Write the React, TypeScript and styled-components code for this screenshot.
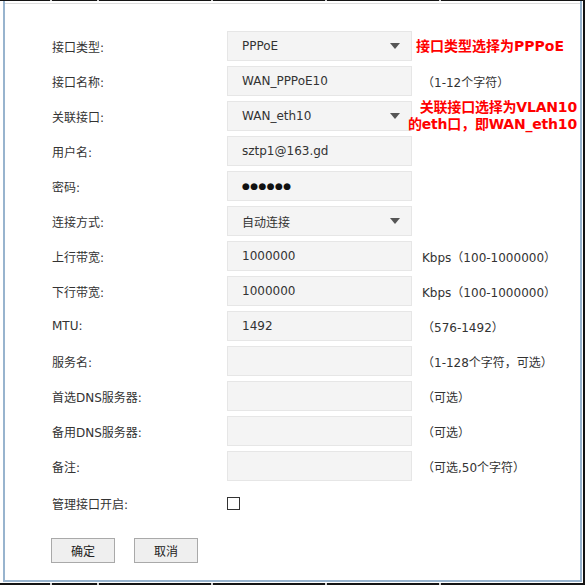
import React from 'react';
import styled, { createGlobalStyle } from 'styled-components';

// ===== TYPES =====
type FieldKind = 'text' | 'select' | 'password' | 'empty';

interface FormRow {
  label: string;
  kind: FieldKind;
  value?: string;
  hint?: string;
  note?: string[];
}

// ===== DATA =====
const rows: FormRow[] = [
  { label: '接口类型:', kind: 'select', value: 'PPPoE', note: ['接口类型选择为PPPoE'] },
  { label: '接口名称:', kind: 'text', value: 'WAN_PPPoE10', hint: '（1-12个字符）' },
  { label: '关联接口:', kind: 'select', value: 'WAN_eth10', note: ['关联接口选择为VLAN10', '的eth口，即WAN_eth10'] },
  { label: '用户名:', kind: 'text', value: 'sztp1@163.gd' },
  { label: '密码:', kind: 'password', value: '●●●●●●' },
  { label: '连接方式:', kind: 'select', value: '自动连接' },
  { label: '上行带宽:', kind: 'text', value: '1000000', hint: 'Kbps（100-1000000）' },
  { label: '下行带宽:', kind: 'text', value: '1000000', hint: 'Kbps（100-1000000）' },
  { label: 'MTU:', kind: 'text', value: '1492', hint: '（576-1492）' },
  { label: '服务名:', kind: 'empty', hint: '（1-128个字符，可选）' },
  { label: '首选DNS服务器:', kind: 'empty', hint: '（可选）' },
  { label: '备用DNS服务器:', kind: 'empty', hint: '（可选）' },
  { label: '备注:', kind: 'empty', hint: '（可选,50个字符）' },
];

const edgeSegments = [50, 45, 112, 112, 112, 0];

// ===== STYLES =====
const GlobalStyle = createGlobalStyle`
  html, body {
    margin: 0;
    padding: 0;
    background: #fff;
  }
  body {
    font-family: "DejaVu Sans", "Noto Sans CJK SC", sans-serif;
    font-size: 12px;
    color: #333;
  }
`;

const Frame = styled.div`
  width: 585px;
  height: 585px;
  box-sizing: border-box;
  display: flex;
  flex-direction: column;
  border-right: 2px solid #141414;
  background: #fff;
  overflow: hidden;
`;

const Edge = styled.div<{ $h: number }>`
  display: flex;
  gap: 2px;
  height: ${p => p.$h}px;
  flex-shrink: 0;
  background: #d4d4d4;
`;

const EdgeSeg = styled.div<{ $w: number }>`
  background: #141414;
  flex: ${p => (p.$w ? `0 0 ${p.$w}px` : '1')};
`;

const Body = styled.div`
  flex: 1;
  display: flex;
  padding: 0 1px 1px 3px;
  min-height: 0;
`;

const Panel = styled.div`
  flex: 1;
  display: flex;
  flex-direction: column;
  border-left: 2px solid #98b4ce;
  border-right: 2px solid #98b4ce;
  border-bottom: 2px solid #98b4ce;
`;

const TopRule = styled.div`
  margin-top: 2px;
  height: 1px;
  background: #dcdcdc;
`;

const Form = styled.div`
  display: flex;
  flex-direction: column;
  gap: 5px;
  padding: 27px 0 0 47px;
`;

const Row = styled.div`
  display: flex;
  align-items: center;
  height: 30px;
`;

const Label = styled.div`
  width: 175px;
  flex-shrink: 0;
  color: #333;
  white-space: nowrap;
`;

const Field = styled.div`
  width: 185px;
  height: 30px;
  box-sizing: border-box;
  flex-shrink: 0;
  display: flex;
  align-items: center;
  justify-content: space-between;
  padding: 0 11px 0 14px;
  background: #f4f4f4;
  border: 1px solid #e6e6e6;
  color: #333;
  white-space: nowrap;
`;

const Dots = styled.span`
  font-family: "DejaVu Sans", sans-serif;
  font-size: 9px;
  letter-spacing: 0.4px;
  color: #111;
`;

const Arrow = styled.svg`
  width: 10px;
  height: 6px;
  flex-shrink: 0;
`;

const Hint = styled.div`
  margin-left: 10px;
  white-space: nowrap;
  color: #333;
`;

const Note = styled.div<{ $multi: boolean }>`
  flex: none;
  margin-left: ${p => (p.$multi ? '-4px' : '4px')};
  color: #ff0000;
  font-weight: bold;
  font-size: 14px;
  line-height: 17px;
  letter-spacing: ${p => (p.$multi ? '-0.2px' : '0')};
  white-space: nowrap;
  text-align: right;
`;

const CheckRow = styled(Row)`
  margin-top: 2px;
`;

const Checkbox = styled.input`
  appearance: none;
  margin: 0;
  width: 13px;
  height: 13px;
  box-sizing: border-box;
  border: 1px solid #333;
  background: #fff;
`;

const Buttons = styled.div`
  display: flex;
  gap: 19px;
  margin: 15px 0 0 -1px;
`;

const Button = styled.button`
  width: 64px;
  height: 25px;
  padding: 0;
  font-family: "DejaVu Sans", "Noto Sans CJK SC", sans-serif;
  font-size: 12px;
  color: #222;
  background: #efefef;
  border: 1px solid #a9a9a9;
  border-radius: 0;
`;

// ===== COMPONENTS =====
const SelectArrow = () => (
  <Arrow viewBox="0 0 10 6">
    <path d="M0 0 L10 0 L5 6 Z" fill="#555" />
  </Arrow>
);

const FieldBox: React.FC<{ row: FormRow }> = ({ row }) => (
  <Field>
    {row.kind === 'password' ? <Dots>{row.value}</Dots> : <span>{row.value}</span>}
    {row.kind === 'select' && <SelectArrow />}
  </Field>
);

const FormLine: React.FC<{ row: FormRow }> = ({ row }) => (
  <Row>
    <Label>{row.label}</Label>
    <FieldBox row={row} />
    {row.hint && <Hint>{row.hint}</Hint>}
    {row.note && (
      <Note $multi={row.note.length > 1}>
        {row.note.map(line => (
          <div key={line}>{line}</div>
        ))}
      </Note>
    )}
  </Row>
);

const EdgeLine: React.FC<{ h: number }> = ({ h }) => (
  <Edge $h={h}>
    {edgeSegments.map((w, i) => (
      <EdgeSeg key={i} $w={w} />
    ))}
  </Edge>
);

const App = () => (
  <>
    <GlobalStyle />
    <Frame>
      <EdgeLine h={1} />
      <Body>
        <Panel>
          <TopRule />
          <Form>
            {rows.map(row => (
              <FormLine key={row.label} row={row} />
            ))}
            <CheckRow>
              <Label>管理接口开启:</Label>
              <Checkbox type="checkbox" readOnly />
            </CheckRow>
            <Buttons>
              <Button>确定</Button>
              <Button>取消</Button>
            </Buttons>
          </Form>
        </Panel>
      </Body>
      <EdgeLine h={2} />
    </Frame>
  </>
);

export default App;
